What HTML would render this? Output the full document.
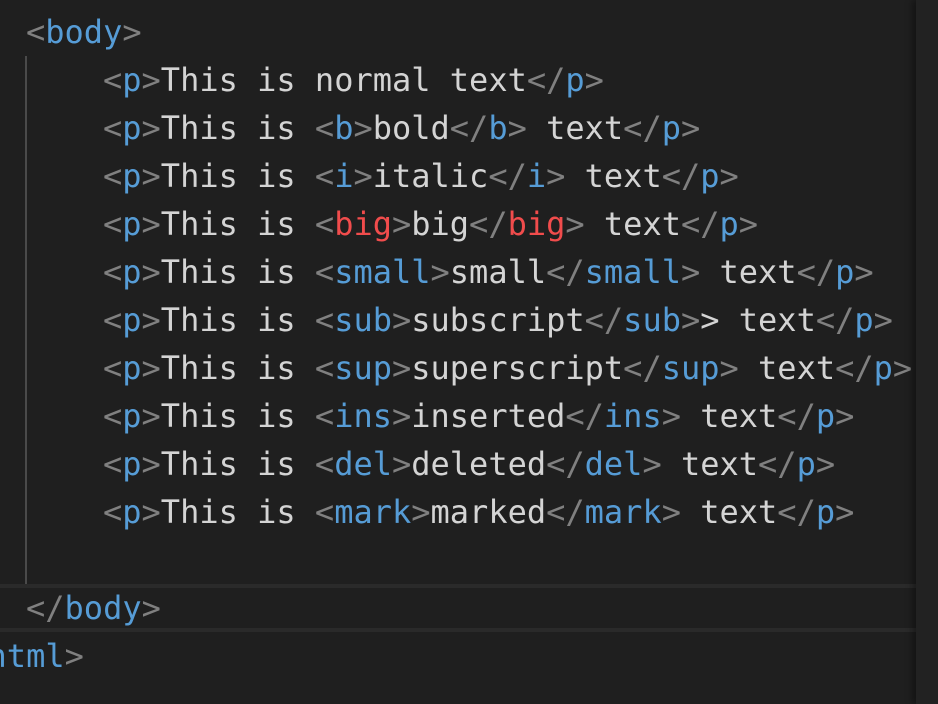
<!DOCTYPE html>
<html><head><meta charset="utf-8"><style>
html,body{margin:0;padding:0;background:#1f1f1f;width:938px;height:704px;overflow:hidden;position:relative}
.wrap{position:absolute;left:0;top:0;width:938px;height:704px;overflow:hidden}
.l{position:absolute;white-space:pre;font-family:"DejaVu Sans Mono","Liberation Mono",monospace;font-size:32px;line-height:48px;color:#d4d4d4}
.g{color:#808080}.b{color:#569cd6}.r{color:#f14c4c}
.guide{position:absolute;left:25px;top:56px;width:2px;height:528px;background:#4a4a4a}
.hl{position:absolute;left:0;width:916px;height:4px;background:#2a2a2a}
.sb{position:absolute;left:916px;top:0;width:22px;height:704px;background:#222;box-shadow:-4px 0 6px rgba(0,0,0,.35)}
</style></head><body><div class="wrap">
<div class="hl" style="top:584px"></div>
<div class="hl" style="top:628px"></div>
<div class="guide"></div>
<div class="l" style="left:26px;top:8px"><span class="g">&lt;</span><span class="b">body</span><span class="g">&gt;</span></div>
<div class="l" style="left:103px;top:56px"><span class="g">&lt;</span><span class="b">p</span><span class="g">&gt;</span>This is normal text<span class="g">&lt;/</span><span class="b">p</span><span class="g">&gt;</span></div>
<div class="l" style="left:103px;top:104px"><span class="g">&lt;</span><span class="b">p</span><span class="g">&gt;</span>This is <span class="g">&lt;</span><span class="b">b</span><span class="g">&gt;</span>bold<span class="g">&lt;/</span><span class="b">b</span><span class="g">&gt;</span> text<span class="g">&lt;/</span><span class="b">p</span><span class="g">&gt;</span></div>
<div class="l" style="left:103px;top:152px"><span class="g">&lt;</span><span class="b">p</span><span class="g">&gt;</span>This is <span class="g">&lt;</span><span class="b">i</span><span class="g">&gt;</span>italic<span class="g">&lt;/</span><span class="b">i</span><span class="g">&gt;</span> text<span class="g">&lt;/</span><span class="b">p</span><span class="g">&gt;</span></div>
<div class="l" style="left:103px;top:200px"><span class="g">&lt;</span><span class="b">p</span><span class="g">&gt;</span>This is <span class="g">&lt;</span><span class="r">big</span><span class="g">&gt;</span>big<span class="g">&lt;/</span><span class="r">big</span><span class="g">&gt;</span> text<span class="g">&lt;/</span><span class="b">p</span><span class="g">&gt;</span></div>
<div class="l" style="left:103px;top:248px"><span class="g">&lt;</span><span class="b">p</span><span class="g">&gt;</span>This is <span class="g">&lt;</span><span class="b">small</span><span class="g">&gt;</span>small<span class="g">&lt;/</span><span class="b">small</span><span class="g">&gt;</span> text<span class="g">&lt;/</span><span class="b">p</span><span class="g">&gt;</span></div>
<div class="l" style="left:103px;top:296px"><span class="g">&lt;</span><span class="b">p</span><span class="g">&gt;</span>This is <span class="g">&lt;</span><span class="b">sub</span><span class="g">&gt;</span>subscript<span class="g">&lt;/</span><span class="b">sub</span><span class="g">&gt;</span>&gt; text<span class="g">&lt;/</span><span class="b">p</span><span class="g">&gt;</span></div>
<div class="l" style="left:103px;top:344px"><span class="g">&lt;</span><span class="b">p</span><span class="g">&gt;</span>This is <span class="g">&lt;</span><span class="b">sup</span><span class="g">&gt;</span>superscript<span class="g">&lt;/</span><span class="b">sup</span><span class="g">&gt;</span> text<span class="g">&lt;/</span><span class="b">p</span><span class="g">&gt;</span></div>
<div class="l" style="left:103px;top:392px"><span class="g">&lt;</span><span class="b">p</span><span class="g">&gt;</span>This is <span class="g">&lt;</span><span class="b">ins</span><span class="g">&gt;</span>inserted<span class="g">&lt;/</span><span class="b">ins</span><span class="g">&gt;</span> text<span class="g">&lt;/</span><span class="b">p</span><span class="g">&gt;</span></div>
<div class="l" style="left:103px;top:440px"><span class="g">&lt;</span><span class="b">p</span><span class="g">&gt;</span>This is <span class="g">&lt;</span><span class="b">del</span><span class="g">&gt;</span>deleted<span class="g">&lt;/</span><span class="b">del</span><span class="g">&gt;</span> text<span class="g">&lt;/</span><span class="b">p</span><span class="g">&gt;</span></div>
<div class="l" style="left:103px;top:488px"><span class="g">&lt;</span><span class="b">p</span><span class="g">&gt;</span>This is <span class="g">&lt;</span><span class="b">mark</span><span class="g">&gt;</span>marked<span class="g">&lt;/</span><span class="b">mark</span><span class="g">&gt;</span> text<span class="g">&lt;/</span><span class="b">p</span><span class="g">&gt;</span></div>
<div class="l" style="left:26px;top:584px"><span class="g">&lt;/</span><span class="b">body</span><span class="g">&gt;</span></div>
<div class="l" style="left:-51px;top:632px"><span class="g">&lt;/</span><span class="b">html</span><span class="g">&gt;</span></div>
<div class="sb"></div>
</div></body></html>
